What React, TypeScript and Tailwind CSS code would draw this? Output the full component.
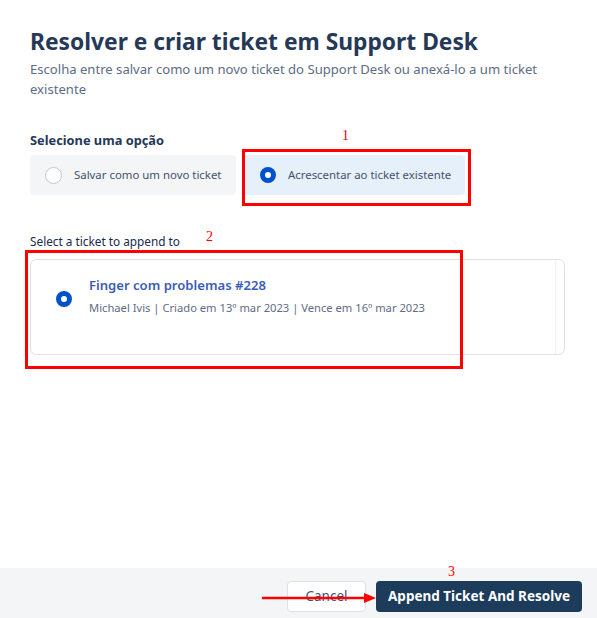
import React from "react";

function Radio({ checked }: { checked: boolean }) {
    if (checked) {
        return <span className="block w-[16px] h-[16px] rounded-full border-[5px] border-[#0052cc] bg-white shrink-0" />;
    }
    return <span className="block w-[17px] h-[17px] rounded-full border border-[#c1c7d0] bg-white shrink-0" />;
}

export default function App() {
    return (
        <div className="relative w-full h-[618px] flex flex-col bg-white font-['Noto_Sans','Open_Sans',sans-serif] text-[#172b4d]">
            <div className="flex-1 px-[30px] pt-[26px]">
                <h1 className="text-[22.8px] leading-[32px] font-bold text-[#253858]">
                    Resolver e criar ticket em Support Desk
                </h1>
                <p className="mt-[1px] text-[13.1px] leading-[20px] text-[#5e6c84] pr-[20px]">
                    Escolha entre salvar como um novo ticket do Support Desk ou anexá-lo a um ticket existente
                </p>

                <div className="mt-[31px] text-[12.8px] leading-[20px] font-bold text-[#253858]">Selecione uma opção</div>
                <div className="mt-[5px] flex gap-[7px]">
                    <div className="w-[206px] h-[40px] rounded-[4px] bg-[#f4f5f7] flex items-center gap-[12px] pl-[15px]">
                        <Radio checked={false} />
                        <span className="text-[11.4px] text-[#42526e]">Salvar como um novo ticket</span>
                    </div>
                    <div className="w-[222px] h-[40px] rounded-[4px] bg-[#e6f0fb] flex items-center gap-[12px] pl-[17px]">
                        <Radio checked />
                        <span className="text-[11.4px] text-[#42526e]">Acrescentar ao ticket existente</span>
                    </div>
                </div>

                <div className="mt-[38px] text-[11.8px] leading-[16px] text-[#172b4d]">Select a ticket to append to</div>
                <div className="mt-[10px] w-[535px] h-[96px] rounded-[6px] border border-[#dfe1e6] flex">
                    <div className="flex-1 flex items-start gap-[17px] pl-[25px] pt-[15px]">
                        <div className="pt-[16px]">
                            <Radio checked />
                        </div>
                        <div>
                            <div className="text-[13.1px] leading-[20px] font-semibold text-[#3b5cb8]">Finger com problemas #228</div>
                            <div className="mt-[5px] text-[11.2px] leading-[16px] text-[#5e6c84]">
                                Michael Ivis | Criado em 13º mar 2023 | Vence em 16º mar 2023
                            </div>
                        </div>
                    </div>
                    <div className="w-[9px] border-l border-[#f0f1f3]" />
                </div>
            </div>

            <div className="h-[50px] bg-[#f4f5f7] flex items-end justify-end gap-[10px] pr-[15px] pb-[6px]">
                <button className="w-[79px] h-[31px] rounded-[4px] border border-[#dfe1e6] bg-white text-[13.5px] text-[#42526e]">
                    Cancel
                </button>
                <button className="w-[206px] h-[31px] rounded-[4px] bg-[#1d3b5a] text-[13.5px] font-bold text-white">
                    Append Ticket And Resolve
                </button>
            </div>

            {/* annotations */}
            <span className="absolute left-[342px] top-[128px] text-[14px] leading-[16px] text-[#ff0000] font-['Liberation_Serif',serif]">1</span>
            <div className="absolute left-[242px] top-[149px] w-[229px] h-[57px] border-[3px] border-[#ff0000]" />
            <span className="absolute left-[206px] top-[229px] text-[14px] leading-[16px] text-[#ff0000] font-['Liberation_Serif',serif]">2</span>
            <div className="absolute left-[25px] top-[250px] w-[438px] h-[119px] border-[3px] border-[#ff0000]" />
            <span className="absolute left-[448px] top-[564px] text-[14px] leading-[16px] text-[#ff0000] font-['Liberation_Serif',serif]">3</span>
            <svg className="absolute left-[260px] top-[590px]" width="118" height="16" viewBox="0 0 118 16">
                <line x1="2" y1="8" x2="106" y2="8" stroke="#ff0000" strokeWidth="2.5" />
                <polygon points="104,3 116,8 104,13" fill="#ff0000" />
            </svg>
        </div>
    );
}
